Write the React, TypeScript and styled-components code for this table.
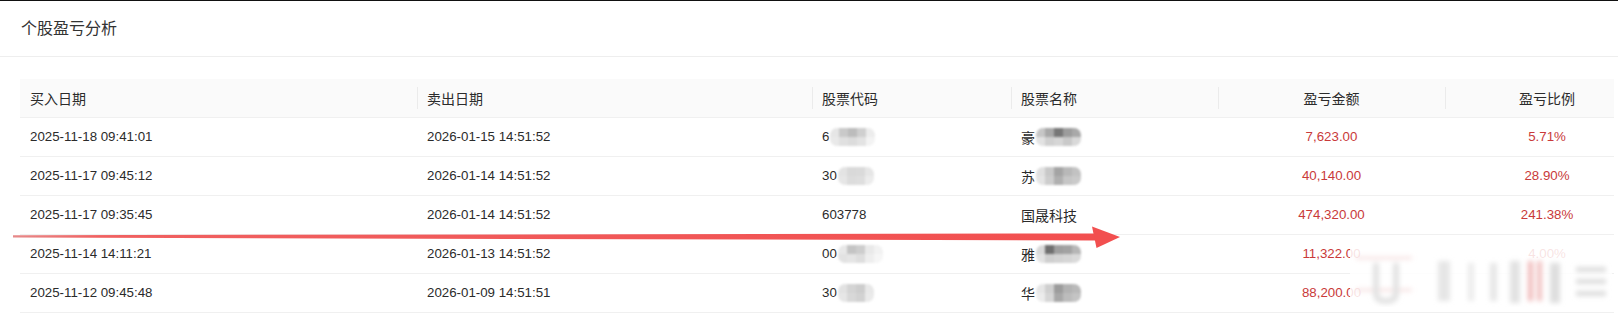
import styled, { createGlobalStyle } from 'styled-components';

type Row = {
  buy: string;
  sell: string;
  code: string;
  codeMask?: string[][];
  name: string;
  nameMask?: string[][];
  amount: string;
  ratio: string;
};

const rows: Row[] = [
  {
    buy: '2025-11-18 09:41:01',
    sell: '2026-01-15 14:51:52',
    code: '6',
    codeMask: [
      ['#e6e6e6', '#c9c9c9', '#bcbcbc', '#cfcfcf', '#ececec'],
      ['#e9e9e9', '#e0e0e0', '#dcdcdc', '#e3e3e3', '#f3f3f3'],
    ],
    name: '豪',
    nameMask: [
      ['#c6c6c6', '#a8a8a8', '#777777', '#9c9c9c', '#a9a9a9'],
      ['#e2e2e2', '#d0d0d0', '#d6d6d6', '#c9c9c9', '#d9d9d9'],
    ],
    amount: '7,623.00',
    ratio: '5.71%',
  },
  {
    buy: '2025-11-17 09:45:12',
    sell: '2026-01-14 14:51:52',
    code: '30',
    codeMask: [
      ['#e3e3e3', '#d9d9d9', '#dadada', '#e6e6e6'],
      ['#e6e6e6', '#dcdcdc', '#dedede', '#ececec'],
    ],
    name: '苏',
    nameMask: [
      ['#e0e0e0', '#c8c8c8', '#a4a4a4', '#b8b8b8', '#c2c2c2'],
      ['#e4e4e4', '#cdcdcd', '#b0b0b0', '#c6c6c6', '#cacaca'],
    ],
    amount: '40,140.00',
    ratio: '28.90%',
  },
  {
    buy: '2025-11-17 09:35:45',
    sell: '2026-01-14 14:51:52',
    code: '603778',
    name: '国晟科技',
    amount: '474,320.00',
    ratio: '241.38%',
  },
  {
    buy: '2025-11-14 14:11:21',
    sell: '2026-01-13 14:51:52',
    code: '00',
    codeMask: [
      ['#e8e8e8', '#c4c4c4', '#cdcdcd', '#e9e9e9', '#f2f2f2'],
      ['#e2e2e2', '#e5e5e5', '#dedede', '#eeeeee', '#f6f6f6'],
    ],
    name: '雅',
    nameMask: [
      ['#d8d8d8', '#6f6f6f', '#9e9e9e', '#a2a2a2', '#b6b6b6'],
      ['#e2e2e2', '#cfcfcf', '#d3d3d3', '#d6d6d6', '#dadada'],
    ],
    amount: '11,322.00',
    ratio: '4.00%',
  },
  {
    buy: '2025-11-12 09:45:48',
    sell: '2026-01-09 14:51:51',
    code: '30',
    codeMask: [
      ['#e2e2e2', '#d4d4d4', '#cdcdcd', '#e8e8e8'],
      ['#e6e6e6', '#d8d8d8', '#d2d2d2', '#eaeaea'],
    ],
    name: '华',
    nameMask: [
      ['#e6e6e6', '#cfcfcf', '#9c9c9c', '#b2b2b2', '#b9b9b9'],
      ['#ececec', '#d6d6d6', '#a8a8a8', '#bcbcbc', '#c4c4c4'],
    ],
    amount: '88,200.00',
    ratio: '',
  },
];

const columns = [
  { title: '买入日期', width: 397, align: 'left' as const },
  { title: '卖出日期', width: 395, align: 'left' as const },
  { title: '股票代码', width: 199, align: 'left' as const },
  { title: '股票名称', width: 207, align: 'left' as const },
  { title: '盈亏金额', width: 227, align: 'center' as const },
  { title: '盈亏比例', width: 204, align: 'center' as const },
];

function Mosaic({ cells }: { cells: string[][] }) {
  return (
    <MaskBox>
      {cells.map((line, i) => (
        <MaskLine key={i}>
          {line.map((c, j) => (
            <MaskBlock key={j} style={{ background: c }} />
          ))}
        </MaskLine>
      ))}
    </MaskBox>
  );
}

export default function App() {
  return (
    <Page>
      <GlobalStyle />
      <TitleBar>个股盈亏分析</TitleBar>

      <TableArea>
        <Scroller>
          <Table>
            <colgroup>
              {columns.map((c) => (
                <col key={c.title} style={{ width: c.width }} />
              ))}
            </colgroup>
            <thead>
              <tr>
                {columns.map((c, i) => (
                  <HeadCell key={c.title} $align={c.align} $sep={i > 0}>
                    {c.title}
                  </HeadCell>
                ))}
              </tr>
            </thead>
            <tbody>
              {rows.map((r) => (
                <tr key={r.buy}>
                  <Cell $num>{r.buy}</Cell>
                  <Cell $num>{r.sell}</Cell>
                  <Cell $num>
                    <Inline>
                      {r.code}
                      {r.codeMask && <Mosaic cells={r.codeMask} />}
                    </Inline>
                  </Cell>
                  <Cell>
                    <Inline>
                      {r.name}
                      {r.nameMask && <Mosaic cells={r.nameMask} />}
                    </Inline>
                  </Cell>
                  <Cell $num $align="center" $red>
                    {r.amount}
                  </Cell>
                  <Cell $num $align="center" $red>
                    {r.ratio}
                  </Cell>
                </tr>
              ))}
            </tbody>
          </Table>
        </Scroller>
      </TableArea>

      {/* red annotation arrow drawn over the table */}
      <Overlay width="1618" height="321" viewBox="0 0 1618 321">
        <defs>
          <linearGradient id="shaft" x1="0" x2="1" y1="0" y2="0">
            <stop offset="0" stopColor="#e68a8a" />
            <stop offset="0.08" stopColor="#f06060" />
            <stop offset="1" stopColor="#f24f4f" />
          </linearGradient>
        </defs>
        <polygon points="13,235.2 1098,233.4 1098,240.4 13,237.6" fill="url(#shaft)" />
        <polygon points="1092,226.5 1120,237 1096.5,248" fill="#f24f4f" />
      </Overlay>

      {/* blurred watermark in the lower right */}
      <Watermark width="262" height="58" viewBox="0 0 262 58">
        <defs>
          <filter id="wm" x="-20%" y="-30%" width="140%" height="160%">
            <feGaussianBlur stdDeviation="2.6" />
          </filter>
        </defs>
        <rect x="0" y="0" width="262" height="58" fill="rgba(255,255,255,0.86)" />
        <g filter="url(#wm)">
          <line x1="6" y1="9" x2="62" y2="9" stroke="#f3d4d4" strokeWidth="2" />
          <line x1="6" y1="41" x2="62" y2="41" stroke="#f3d4d4" strokeWidth="2" />
          <path d="M26 14 V44 Q26 52 36 52 Q46 52 46 44 V14" stroke="#e2e2e2" strokeWidth="6" fill="none" />
          <rect x="88" y="12" width="12" height="40" fill="#e6e6e6" />
          <rect x="118" y="14" width="6" height="38" fill="#ebebeb" />
          <rect x="140" y="14" width="7" height="38" fill="#e6e6e6" />
          <rect x="160" y="12" width="10" height="42" fill="#e2e2e2" />
          <rect x="178" y="12" width="5" height="40" fill="#efb8b8" />
          <rect x="187" y="12" width="5" height="40" fill="#f0c0c0" />
          <rect x="200" y="14" width="10" height="40" fill="#dedede" />
          <rect x="226" y="18" width="30" height="5" fill="#dcdcdc" />
          <rect x="226" y="30" width="30" height="5" fill="#dcdcdc" />
          <rect x="226" y="42" width="30" height="5" fill="#dcdcdc" />
        </g>
      </Watermark>
    </Page>
  );
}

const GlobalStyle = createGlobalStyle`
  html, body {
    margin: 0;
    padding: 0;
    background: #fff;
  }
  body {
    font-family: "Liberation Sans", "Noto Sans CJK SC", sans-serif;
    color: #333;
  }
`;

const Page = styled.div`
  position: relative;
  width: 1618px;
  height: 321px;
  overflow: hidden;
  border-top: 1px solid #111;
  box-sizing: border-box;
`;

const TitleBar = styled.div`
  display: flex;
  align-items: center;
  height: 56px;
  padding: 0 0 4px 21px;
  box-sizing: border-box;
  border-bottom: 1px solid #eeeeee;
  font-family: "Noto Sans CJK SC", sans-serif;
  font-size: 16px;
  color: #333;
`;

const TableArea = styled.div`
  padding: 22px 4px 0 20px;
`;

const Scroller = styled.div`
  overflow: hidden;
`;

const Table = styled.table`
  width: 1629px;
  table-layout: fixed;
  border-collapse: collapse;
  font-size: 14px;
`;

const HeadCell = styled.th<{ $align: 'left' | 'center'; $sep: boolean }>`
  position: relative;
  height: 38px;
  padding: 0 10px;
  background: #fafafa;
  border-bottom: 1px solid #f0f0f0;
  text-align: ${(p) => p.$align};
  font-weight: 400;
  font-family: "Noto Sans CJK SC", sans-serif;
  color: #2b2b2b;
  box-sizing: border-box;

  &::before {
    content: '';
    display: ${(p) => (p.$sep ? 'block' : 'none')};
    position: absolute;
    left: 0;
    top: 50%;
    width: 1px;
    height: 22px;
    transform: translateY(-50%);
    background: #ebebeb;
  }
`;

const Cell = styled.td<{ $num?: boolean; $align?: 'left' | 'center'; $red?: boolean }>`
  height: 39px;
  padding: 0 10px;
  border-bottom: 1px solid #f0f0f0;
  text-align: ${(p) => p.$align ?? 'left'};
  font-size: ${(p) => (p.$num ? '13.3px' : '14px')};
  font-family: ${(p) =>
    p.$num ? '"Liberation Sans", "Noto Sans CJK SC", sans-serif' : '"Noto Sans CJK SC", sans-serif'};
  color: ${(p) => (p.$red ? '#c93a3a' : '#2b2b2b')};
  white-space: nowrap;
  box-sizing: border-box;
`;

const Inline = styled.span`
  display: inline-flex;
  align-items: center;
`;

const MaskBox = styled.span`
  display: inline-flex;
  flex-direction: column;
  margin-left: 1px;
  border-radius: 7px;
  overflow: hidden;
  filter: blur(0.8px);
`;

const MaskLine = styled.span`
  display: flex;
`;

const MaskBlock = styled.span`
  display: block;
  width: 9px;
  height: 9px;
`;

const Overlay = styled.svg`
  position: absolute;
  left: 0;
  top: -1px;
  pointer-events: none;
`;

const Watermark = styled.svg`
  position: absolute;
  left: 1350px;
  top: 248px;
  pointer-events: none;
`;
